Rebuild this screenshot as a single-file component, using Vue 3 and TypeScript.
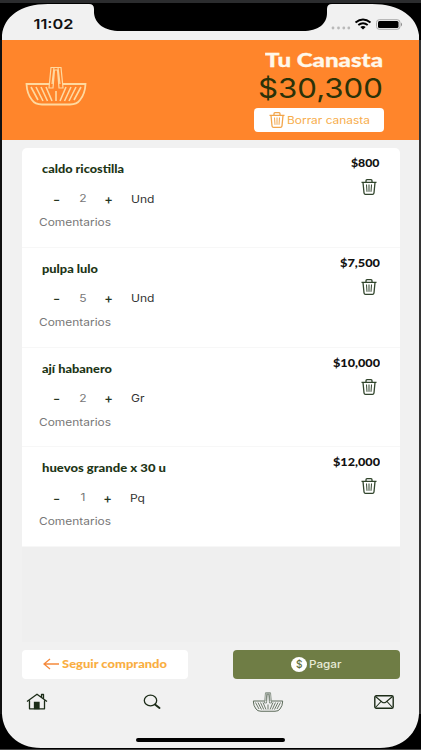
<script setup lang="ts">
interface Item {
  name: string
  price: string
  qty: number
  unit: string
  nameWidth: number
  priceWidth: number
  unitWidth: number
}

const items: Item[] = [
  { name: 'caldo ricostilla', price: '$800', qty: 2, unit: 'Und', nameWidth: 82, priceWidth: 28.5, unitWidth: 23.5 },
  { name: 'pulpa lulo', price: '$7,500', qty: 5, unit: 'Und', nameWidth: 56, priceWidth: 40, unitWidth: 23.5 },
  { name: 'ají habanero', price: '$10,000', qty: 2, unit: 'Gr', nameWidth: 70, priceWidth: 47, unitWidth: 13.5 },
  { name: 'huevos grande x 30 u', price: '$12,000', qty: 1, unit: 'Pq', nameWidth: 124, priceWidth: 47, unitWidth: 15 },
]
</script>

<template>
  <div class="device">
    <svg class="status" width="422" height="40" viewBox="0 0 422 40">
      <rect width="421" height="40" fill="#000" />
      <rect width="421" height="3" fill="#2b2c2e" />
      <path
        d="M2 40V35C4 17 20 4 48 4H89Q94 4 94 9V13C95 24 105 31 120 31H303C318 31 327 24 327 13V9Q327 4 332 4H372C400 4 417 17 419 35V40Z"
        fill="#f1f1f1"
      />
      <text class="clock" x="33.5" y="29" textLength="40" lengthAdjust="spacingAndGlyphs">11:02</text>
      <g fill="#b9b9b9">
        <circle cx="333" cy="28" r="1.4" />
        <circle cx="338.500" cy="28" r="1.4" />
        <circle cx="343.800" cy="28" r="1.4" />
        <circle cx="348.800" cy="28" r="1.4" />
      </g>
      <g fill="none" stroke="#000" stroke-width="1.9">
        <path d="M355.500 22.600Q363 16.600 370.500 22.600" />
        <path d="M358.300 25.100Q363 21.400 367.700 25.100" />
      </g>
      <path d="M360.300 26.900Q363 25 365.700 26.900L363 29.400Z" />
      <rect x="376.500" y="19.700" width="23.500" height="9.600" rx="2.800" fill="none" stroke="#aaa" />
      <rect x="378" y="21" width="20.500" height="7" rx="1.500" />
      <path d="M401 22.500Q403 24.500 401 26.500Z" fill="#888" />
    </svg>

    <header class="header">
      <svg class="basket-big" viewBox="0 0 62 40"><use href="#basket" /></svg>
      <div class="summary">
        <svg class="title" width="119" height="24">
          <text x="0" y="18" textLength="118" lengthAdjust="spacingAndGlyphs">Tu Canasta</text>
        </svg>
        <svg class="total" width="130" height="34">
          <text x="4" y="26" textLength="125" lengthAdjust="spacingAndGlyphs">$30,300</text>
        </svg>
        <button class="clear">
          <svg class="bin" viewBox="0 0 16 16"><use href="#bin" /></svg>
          <svg width="84" height="16">
            <text x="0" y="12" textLength="83" lengthAdjust="spacingAndGlyphs">Borrar canasta</text>
          </svg>
        </button>
      </div>
    </header>

    <main class="list">
      <article v-for="item in items" :key="item.name" class="item">
        <div class="info">
          <svg class="name" width="150" height="18">
            <text x="0" y="13" :textLength="item.nameWidth" lengthAdjust="spacingAndGlyphs">{{ item.name }}</text>
          </svg>
          <div class="stepper">
            <span class="sign minus">-</span>
            <span class="qty">{{ item.qty }}</span>
            <span class="sign plus" :class="{ tight: item.qty === 1 }">+</span>
            <svg class="unit" width="30" height="16">
              <text x="0" y="12" :textLength="item.unitWidth" lengthAdjust="spacingAndGlyphs">{{ item.unit }}</text>
            </svg>
          </div>
          <svg class="comment" width="80" height="16">
            <text x="0" y="12" textLength="72" lengthAdjust="spacingAndGlyphs">Comentarios</text>
          </svg>
        </div>
        <div class="side">
          <svg class="price" :width="item.priceWidth" height="16">
            <text x="0" y="12" :textLength="item.priceWidth" lengthAdjust="spacingAndGlyphs">{{ item.price }}</text>
          </svg>
          <svg class="bin" viewBox="0 0 16 16"><use href="#bin" /></svg>
        </div>
      </article>
    </main>

    <section class="actions">
      <button class="back">
        <svg class="arrow" width="17" height="12" viewBox="0 0 17 12">
          <path d="M16 6H1M7 1L1 6L7 11" fill="none" stroke="#f58a3c" stroke-width="1.300" />
        </svg>
        <svg width="106" height="18">
          <text x="0" y="13" textLength="105" lengthAdjust="spacingAndGlyphs">Seguir comprando</text>
        </svg>
      </button>
      <button class="pay">
        <span class="coin">$</span>
        <svg width="34" height="18">
          <text x="0" y="13" textLength="32.500" lengthAdjust="spacingAndGlyphs">Pagar</text>
        </svg>
      </button>
    </section>

    <nav class="tabs">
      <svg class="house" width="22" height="17" viewBox="0 0 22 17" fill="none" stroke="#1c2c18" stroke-width="1.300">
        <path d="M1 8.500L11 1.200L21 8.500M3.500 7.500V15.800H18.500V7.500M15.500 4V1.500H17.500V5.500" stroke-linejoin="round" />
        <path d="M8.500 15.500V9.500H13V15.500Z" fill="#1c2c18" />
      </svg>
      <svg class="search" width="18" height="16" viewBox="0 0 18 16" fill="none" stroke="#1c2c18">
        <ellipse cx="7.500" cy="6.500" rx="6.200" ry="5.300" stroke-width="1.300" />
        <path d="M12 10.500L16.500 14" stroke-width="2" stroke-linecap="round" />
      </svg>
      <svg class="basket-small" viewBox="0 0 62 40"><use href="#basket" /></svg>
      <svg class="mail" width="20" height="14" viewBox="0 0 20 14" fill="none" stroke="#1c2c18" stroke-width="1.400">
        <rect x=".8" y=".8" width="18.400" height="12.400" rx="1.500" />
        <path d="M1.500 1.500L8 7Q10 8.500 12 7L18.500 1.500M1.500 12.500L7 6.500M18.500 12.500L13 6.500" stroke-width="1.100" />
      </svg>
    </nav>

    <footer class="home-area">
      <svg width="422" height="36" viewBox="0 0 422 36">
        <path d="M0 0H2C3 18 17 34 41 34H380C404 34 418 18 419 0H421V36H0Z" />
        <path d="M0 35.500H421" stroke="#444" />
        <rect x="136" y="24" width="149" height="4" rx="2" />
      </svg>
    </footer>

    <svg class="defs" width="0" height="0">
      <defs>
        <symbol id="basket" viewBox="0 0 62 40">
          <g fill="none" stroke="currentColor">
            <path
              d="M24 18H1.500Q2 28 7 34Q10 38.500 17 38.500H45Q52 38.500 55 34Q60 28 60.500 18H38"
              stroke-width="1.800"
            />
            <path d="M24 22L26 1.500H36L38 22H34L32.500 4H29.500L28 22ZM29 1.500L27 18M33 1.500L35 18" stroke-width="1.200" />
            <path
              d="M6 21L13 34M11 21L18 35M16 21L22.500 35M21 21L27 35M56 21L49 34M51 21L44 35M46 21L39.500 35M41 21L35 35M31 25V35"
              stroke-width="1.600"
            />
          </g>
        </symbol>
        <symbol id="bin" viewBox="0 0 16 16">
          <g fill="none" stroke="currentColor" stroke-width="1.300">
            <path d="M.5 3.300H15.500M5 3V1.700Q5 .7 6 .7H10Q11 .7 11 1.700V3" />
            <path d="M2 3.500L3 13.800Q3.200 15.300 4.500 15.300H11.500Q12.800 15.300 13 13.800L14 3.500" />
            <path d="M5.500 5.500L6 12.800M8 5.500V12.800M10.500 5.500L10 12.800" stroke-width="1" />
          </g>
        </symbol>
      </defs>
    </svg>
  </div>
</template>

<style>
body {
  margin: 0;
  background: #000;
}
</style>

<style scoped>
.device {
  position: relative;
  box-sizing: border-box;
  display: flex;
  flex-direction: column;
  width: 422px;
  height: 750px;
  overflow: hidden;
  background: linear-gradient(90deg, #111 0 2px, #f1f1f1 2px 419px, #333 419px 421px, #fff 421px);
  font-family: Inter, sans-serif;
}
.device > * {
  flex: none;
}
svg {
  display: block;
  flex: none;
}
button {
  display: flex;
  align-items: center;
  justify-content: center;
  box-sizing: border-box;
  padding: 0;
  border: 0;
  border-radius: 4px;
  background: #fff;
}
.clock {
  font: 600 13.500px Inter, sans-serif;
  fill: #111;
}
.header {
  display: flex;
  justify-content: space-between;
  box-sizing: border-box;
  width: 417px;
  height: 100px;
  margin-left: 2px;
  padding: 10px 35px 0 23px;
  background: #ff852b;
}
.basket-big {
  width: 62px;
  height: 40px;
  margin-top: 16px;
  color: #ffd9a0;
}
.summary {
  display: flex;
  flex-direction: column;
  align-items: flex-end;
}
.title {
  margin: -1px 0 0 0;
  font: 900 19px Lato, sans-serif;
  fill: #fff8ea;
  stroke: #fff8ea;
  stroke-width: 0.3px;
}
.total {
  margin-top: -1px;
  font: 400 26.500px Inter, sans-serif;
  fill: #2b3208;
}
.clear {
  width: 130px;
  height: 24px;
  margin-top: 2px;
  font: 400 10.500px Inter, sans-serif;
  fill: #f7ad4c;
  color: #f2a54a;
}
.clear .bin {
  width: 16px;
  height: 16px;
  margin: 0 2px 0 2px;
}
.list {
  box-sizing: border-box;
  width: 378px;
  height: 494px;
  margin: 8px 0 0 21.500px;
  border-radius: 5px 5px 0 0;
  overflow: hidden;
  background: #efefef;
}
.item {
  display: flex;
  justify-content: space-between;
  box-sizing: border-box;
  height: 99.750px;
  padding: 0 20px 0 17.500px;
  border-bottom: 1px solid #f7f7f7;
  background: #fff;
}
.name {
  margin: 12px 0 0 3px;
  font: 900 11px Lato, sans-serif;
  fill: #1d3516;
}
.stepper {
  display: flex;
  align-items: center;
  height: 16px;
  margin-top: 12.500px;
  font-size: 10.500px;
  color: #777;
}
.sign {
  width: 9px;
  font-size: 13px;
  font-weight: 500;
  text-align: center;
  color: #26361f;
}
.minus {
  margin-left: 13px;
  transform: scaleX(1.2);
}
.qty {
  width: 10px;
  margin-left: 17px;
  text-align: center;
  transform: scaleX(1.15);
}
.plus {
  margin-left: 16px;
}
.plus.tight {
  margin-left: 15px;
}
.unit {
  margin-left: 18px;
  font: 400 10.500px Inter, sans-serif;
  fill: #333;
}
.comment {
  margin-top: 7.500px;
  font: 400 10.500px Inter, sans-serif;
  fill: #777;
}
.side {
  display: flex;
  flex-direction: column;
  align-items: flex-end;
}
.price {
  margin-top: 7px;
  font: 900 11px Lato, sans-serif;
  fill: #111;
}
.side .bin {
  width: 16px;
  height: 16px;
  margin: 8px 2.500px 0 0;
  color: #31452c;
}
.actions {
  display: flex;
  justify-content: space-between;
  width: 378px;
  margin: 7.500px 0 0 21.500px;
}
.back,
.pay {
  width: 166.500px;
  height: 29.500px;
}
.back {
  gap: 2px;
  padding-left: 2px;
  font: 900 11px Lato, sans-serif;
  fill: #f9ae42;
}
.pay {
  gap: 2px;
  padding-left: 2px;
  background: #6f7d45;
  font: 500 10.500px Inter, sans-serif;
  fill: #e6ead6;
}
.coin {
  width: 16px;
  height: 15px;
  border-radius: 50%;
  background: #fff;
  font: 500 10px/15px Inter, sans-serif;
  text-align: center;
  color: #5e6d3a;
}
.tabs {
  display: flex;
  align-items: center;
  justify-content: space-between;
  width: 368px;
  height: 45px;
  margin-left: 26px;
}
.search {
  margin-left: 5px;
}
.basket-small {
  width: 32px;
  height: 20px;
  margin-left: 2px;
  color: #4c5c49;
}
.home-area {
  margin-top: -10px;
}
.defs {
  position: absolute;
}
</style>
